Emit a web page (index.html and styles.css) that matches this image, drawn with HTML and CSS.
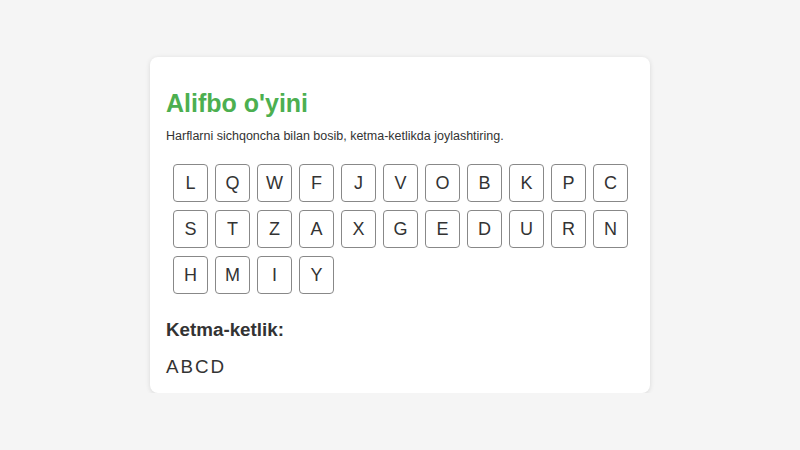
FILE: index.html
```html
<!DOCTYPE html>
<html lang="uz">
<head>
<meta charset="utf-8">
<title>Alifbo o'yini</title>
<link rel="stylesheet" href="styles.css">
</head>
<body>
<main class="card">
  <h2 class="title">Alifbo o'yini</h2>
  <p class="hint">Harflarni sichqoncha bilan bosib, ketma-ketlikda joylashtiring.</p>
  <div class="letters">
    <button class="letter">L</button>
    <button class="letter">Q</button>
    <button class="letter">W</button>
    <button class="letter">F</button>
    <button class="letter">J</button>
    <button class="letter">V</button>
    <button class="letter">O</button>
    <button class="letter">B</button>
    <button class="letter">K</button>
    <button class="letter">P</button>
    <button class="letter">C</button>
    <button class="letter">S</button>
    <button class="letter">T</button>
    <button class="letter">Z</button>
    <button class="letter">A</button>
    <button class="letter">X</button>
    <button class="letter">G</button>
    <button class="letter">E</button>
    <button class="letter">D</button>
    <button class="letter">U</button>
    <button class="letter">R</button>
    <button class="letter">N</button>
    <button class="letter">H</button>
    <button class="letter">M</button>
    <button class="letter">I</button>
    <button class="letter">Y</button>
  </div>
  <h3 class="seq-title">Ketma-ketlik:</h3>
  <div class="sequence">ABCD</div>
</main>
</body>
</html>
```
FILE: styles.css
```css
html, body {
  margin: 0;
  padding: 0;
}
body {
  background: #f5f5f5;
  font-family: "Liberation Sans", Arial, sans-serif;
  color: #333;
  padding-top: 57px;
}
.card {
  width: 468px;
  margin: 0 auto;
  background: #fff;
  border-radius: 8px;
  box-shadow: 0 1px 5px rgba(0, 0, 0, 0.12);
  padding: 16px 16px 15px;
}
.title {
  margin: 16px 0 0;
  font-size: 25px;
  line-height: 28px;
  font-weight: bold;
  color: #4caf50;
}
.hint {
  margin: 12px 0 0;
  font-size: 12.5px;
  line-height: 15px;
  color: #333;
}
.letters {
  display: flex;
  flex-wrap: wrap;
  gap: 8px 7px;
  padding-left: 7px;
  margin-top: 20px;
}
.letter {
  width: 35px;
  height: 38px;
  padding: 0;
  margin: 0;
  border: 1px solid #888;
  border-radius: 4px;
  background: #fff;
  color: #333;
  font-family: "Liberation Sans", Arial, sans-serif;
  font-size: 18px;
}
.seq-title {
  margin: 25px 0 0;
  font-size: 18.8px;
  line-height: 22px;
  font-weight: bold;
  color: #333;
}
.sequence {
  margin-top: 15px;
  font-size: 18.8px;
  line-height: 22px;
  letter-spacing: 2px;
  color: #333;
}
```
